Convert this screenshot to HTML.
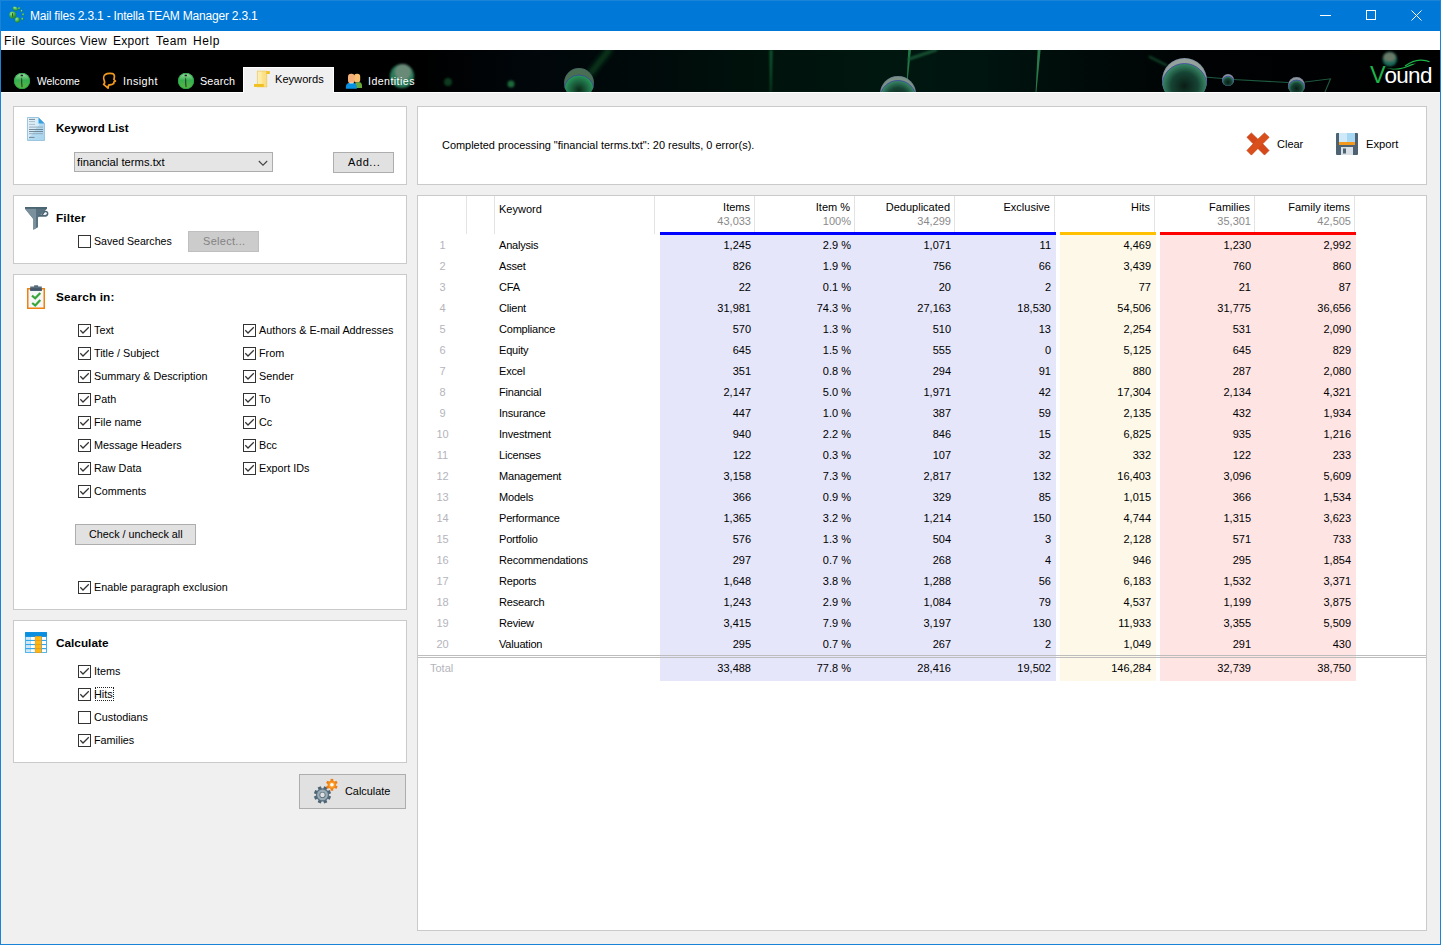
<!DOCTYPE html>
<html><head><meta charset="utf-8"><title>Intella</title><style>
*{margin:0;padding:0;box-sizing:border-box}
html,body{width:1441px;height:945px;overflow:hidden;background:#f0f0f0;font-family:"Liberation Sans",sans-serif}
.a{position:absolute}
.t{position:absolute;white-space:pre;font-size:11px;line-height:11px;color:#000}
.b{font-weight:bold}
.r{text-align:right}
.c{text-align:center}
svg{position:absolute;overflow:visible}
</style></head>
<body>
<div class="a" style="left:0px;top:0px;width:1441px;height:31px;background:#0078d7"></div>
<div class="a" style="left:0px;top:0px;width:1441px;height:1px;background:#1a84d8"></div>
<div class="a" style="left:0px;top:0px;width:1px;height:945px;background:#1883d7"></div>
<div class="a" style="left:1440px;top:0px;width:1px;height:945px;background:#1883d7"></div>
<div class="a" style="left:0px;top:944px;width:1441px;height:1px;background:#1883d7"></div>
<svg style="left:0;top:0" width="30" height="30" viewBox="0 0 30 30">
<defs><radialGradient id="gg" cx="0.35" cy="0.3" r="0.8"><stop offset="0" stop-color="#9ae88a"/><stop offset="0.6" stop-color="#3aa83a"/><stop offset="1" stop-color="#1f7a1f"/></radialGradient></defs>
<ellipse cx="15.3" cy="8.7" rx="2.7" ry="2" transform="rotate(25 15.3 8.7)" fill="url(#gg)"/>
<ellipse cx="19.3" cy="8.3" rx="1.3" ry="1.1" fill="url(#gg)"/>
<ellipse cx="21.6" cy="11" rx="1" ry="1.3" fill="url(#gg)"/>
<ellipse cx="23.2" cy="14.6" rx="1" ry="1.4" fill="url(#gg)"/>
<ellipse cx="22.4" cy="19" rx="1.1" ry="1.4" fill="url(#gg)"/>
<circle cx="12.7" cy="15" r="3.4" fill="url(#gg)"/>
<ellipse cx="17.4" cy="20" rx="2.4" ry="2.7" fill="url(#gg)"/>
<path d="M12.4 13.2 L12.8 16.8" stroke="#2a3a2a" stroke-width="0.9"/>
</svg>
<div class="t " style="left:30px;top:10px;font-size:12px;line-height:12px;color:#fff;letter-spacing:-0.2px">Mail files 2.3.1 - Intella TEAM Manager 2.3.1</div>
<div class="a" style="left:1320px;top:15px;width:11px;height:1px;background:#fff"></div>
<div class="a" style="left:1366px;top:10px;width:10px;height:10px;border:1px solid #fff"></div>
<svg style="left:1411px;top:10px" width="11" height="11" viewBox="0 0 11 11"><path d="M0.5 0.5 L10.5 10.5 M10.5 0.5 L0.5 10.5" stroke="#fff" stroke-width="1"/></svg>
<div class="a" style="left:1px;top:31px;width:1439px;height:19px;background:#fff"></div>
<div class="t " style="left:4px;top:35px;font-size:12px;line-height:12px;letter-spacing:0.6px">File</div>
<div class="t " style="left:31px;top:35px;font-size:12px;line-height:12px;letter-spacing:0.1px">Sources</div>
<div class="t " style="left:80px;top:35px;font-size:12px;line-height:12px;letter-spacing:0.3px">View</div>
<div class="t " style="left:113px;top:35px;font-size:12px;line-height:12px;letter-spacing:0.25px">Export</div>
<div class="t " style="left:156px;top:35px;font-size:12px;line-height:12px;letter-spacing:0.5px">Team</div>
<div class="t " style="left:193px;top:35px;font-size:12px;line-height:12px;letter-spacing:0.6px">Help</div>
<div class="a" style="left:1px;top:50px;width:1439px;height:42px;overflow:hidden;background:linear-gradient(90deg,#000 0px,#000 420px,#01060a 520px,#000a0a 640px,#00120c 760px,#00170f 880px,#001410 980px,#000a08 1100px,#000204 1200px,#000 1439px)">
<svg style="left:-1px;top:-50px" width="1441" height="92" viewBox="0 0 1441 92">
<defs><filter id="bl" x="-50%" y="-50%" width="200%" height="200%"><feGaussianBlur stdDeviation="1.2"/></filter>
<filter id="bl2" x="-50%" y="-50%" width="200%" height="200%"><feGaussianBlur stdDeviation="2.5"/></filter></defs>
<g fill="none" stroke-linecap="round">
<path d="M280 86 L560 86" stroke="#0a2a18" stroke-width="4" filter="url(#bl2)" opacity="0.8"/>
<path d="M609 50 L590 74" stroke="#0f4a22" stroke-width="6" filter="url(#bl2)" opacity="0.8"/>
<path d="M769.5 50 L772.5 50 L771.3 92 L770.3 92Z" fill="#1f8a48" stroke="none" filter="url(#bl)" opacity="0.6"/>
<path d="M908.2 50 L911 50 L907.8 79 L906.8 79Z" fill="#2a9a5a" stroke="none" opacity="0.75"/>
<path d="M909 59 L936 50" stroke="#1a5a38" stroke-width="3" filter="url(#bl)" opacity="0.9"/>
<path d="M1037.6 50 L1040.6 50 L1036.4 92 L1035.6 92Z" fill="#3aa66a" stroke="none" opacity="0.7"/>
<path d="M1150 57 L1166 65" stroke="#0c3a24" stroke-width="3" filter="url(#bl)"/>
<path d="M1189 50 L1189 58" stroke="#1a5a3a" stroke-width="3" filter="url(#bl)"/>
<path d="M1205 77 L1222 78.5 M1233 79.5 L1288 82.5 M1305 82 L1330.5 78.8 L1325 92" stroke="#1e5a40" stroke-width="1.1"/>
</g>
<circle cx="448" cy="82" r="4" fill="#0a3a20" filter="url(#bl)"/>
<circle cx="511" cy="84" r="3.5" fill="#1f6a3a" filter="url(#bl)"/>
<g filter="url(#bl)"><circle cx="402" cy="76" r="12" fill="#2a7a5a"/><circle cx="403" cy="72" r="8" fill="#6a8a78"/></g>
</svg>
</div>
<div class="a" style="left:0;top:50px;width:1440px;height:42px;overflow:hidden">
<svg style="left:562px;top:16px" width="34" height="34" viewBox="-17 -17 34 34">
<defs><clipPath id="cp1"><circle cx="0" cy="0" r="15"/></clipPath>
<radialGradient id="bb1" cx="0.5" cy="0.5" r="0.5"><stop offset="0" stop-color="#0a2a18"/><stop offset="0.6" stop-color="#1e6a44"/><stop offset="1" stop-color="#2a9a5a"/></radialGradient></defs>
<circle cx="0" cy="0" r="15" fill="#4a6e52" opacity="1"/>
<g clip-path="url(#cp1)"><circle cx="0" cy="7" r="15" fill="url(#bb1)"/>
<circle cx="0" cy="7" r="15" fill="none" stroke="#3a3aa8" stroke-width="1" opacity="0.7"/></g>
<circle cx="0" cy="0" r="14.6" fill="none" stroke="#3a4ab8" stroke-width="0.8" opacity="0.25"/>
</svg>
<svg style="left:877.5px;top:24px" width="40" height="40" viewBox="-20 -20 40 40">
<defs><clipPath id="cp2"><circle cx="0" cy="0" r="18"/></clipPath>
<radialGradient id="bb2" cx="0.5" cy="0.5" r="0.5"><stop offset="0" stop-color="#0a1e16"/><stop offset="0.6" stop-color="#164434"/><stop offset="1" stop-color="#3a8a68"/></radialGradient></defs>
<circle cx="0" cy="0" r="18" fill="#8a9e92" opacity="0.9"/>
<g clip-path="url(#cp2)"><circle cx="0" cy="4.5" r="18" fill="url(#bb2)"/>
<circle cx="0" cy="4.5" r="18" fill="none" stroke="#3a3aa8" stroke-width="1" opacity="0.7"/></g>
<circle cx="0" cy="0" r="17.6" fill="none" stroke="#3a4ab8" stroke-width="0.8" opacity="0.25"/>
</svg>
<svg style="left:1160.0px;top:6.0px" width="49.0" height="49.0" viewBox="-24.5 -24.5 49.0 49.0">
<defs><clipPath id="cp3"><circle cx="0" cy="0" r="22.5"/></clipPath>
<radialGradient id="bb3" cx="0.5" cy="0.5" r="0.5"><stop offset="0" stop-color="#0a1e16"/><stop offset="0.6" stop-color="#164434"/><stop offset="1" stop-color="#3a8a68"/></radialGradient></defs>
<circle cx="0" cy="0" r="22.5" fill="#a4b4ac" opacity="0.9"/>
<g clip-path="url(#cp3)"><circle cx="0" cy="5.5" r="22.5" fill="url(#bb3)"/>
<circle cx="0" cy="5.5" r="22.5" fill="none" stroke="#3a3aa8" stroke-width="1" opacity="0.7"/></g>
<circle cx="0" cy="0" r="22.1" fill="none" stroke="#3a4ab8" stroke-width="0.8" opacity="0.25"/>
</svg>
<svg style="left:1219.5px;top:21.599999999999994px" width="16" height="16" viewBox="-8 -8 16 16">
<defs><clipPath id="cp4"><circle cx="0" cy="0" r="6"/></clipPath>
<radialGradient id="bb4" cx="0.5" cy="0.5" r="0.5"><stop offset="0" stop-color="#0a1e16"/><stop offset="0.6" stop-color="#164434"/><stop offset="1" stop-color="#3a8a68"/></radialGradient></defs>
<circle cx="0" cy="0" r="6" fill="#a0aaa8" opacity="0.9"/>
<g clip-path="url(#cp4)"><circle cx="0" cy="2.2" r="6" fill="url(#bb4)"/>
<circle cx="0" cy="2.2" r="6" fill="none" stroke="#3a3aa8" stroke-width="1" opacity="0.7"/></g>
<circle cx="0" cy="0" r="5.6" fill="none" stroke="#3a4ab8" stroke-width="0.8" opacity="0.25"/>
</svg>
<svg style="left:1286.0px;top:24.700000000000003px" width="21.0" height="21.0" viewBox="-10.5 -10.5 21.0 21.0">
<defs><clipPath id="cp5"><circle cx="0" cy="0" r="8.5"/></clipPath>
<radialGradient id="bb5" cx="0.5" cy="0.5" r="0.5"><stop offset="0" stop-color="#0a1e16"/><stop offset="0.6" stop-color="#164434"/><stop offset="1" stop-color="#3a8a68"/></radialGradient></defs>
<circle cx="0" cy="0" r="8.5" fill="#a0aaa8" opacity="0.9"/>
<g clip-path="url(#cp5)"><circle cx="0" cy="3" r="8.5" fill="url(#bb5)"/>
<circle cx="0" cy="3" r="8.5" fill="none" stroke="#3a3aa8" stroke-width="1" opacity="0.7"/></g>
<circle cx="0" cy="0" r="8.1" fill="none" stroke="#3a4ab8" stroke-width="0.8" opacity="0.25"/>
</svg>
</div>
<div class="a" style="left:1px;top:92px;width:1439px;height:1px;background:#fff"></div>
<div class="t " style="left:1370px;top:64px;font-size:22.5px;line-height:23px;color:#fff;letter-spacing:-0.7px"><span style="color:#1db34a;font-size:23.5px;letter-spacing:-1.2px">V</span>ound</div>
<svg style="left:1350px;top:50px" width="91" height="42" viewBox="0 0 91 42">
<defs><filter id="bl3"><feGaussianBlur stdDeviation="0.9"/></filter></defs>
<g filter="url(#bl3)"><circle cx="39.8" cy="9" r="7.3" fill="#1a6a5a"/><ellipse cx="39.5" cy="7" rx="6" ry="4.5" fill="#6a7a68"/></g>
<path d="M35.4 17.5 C42 19.5 50 19 57 16 C61 14.3 64 13.5 66 13.6 C62 15.5 57 18 50 19.3 C44 20 39 19.2 35.4 17.5Z" fill="#1db34a"/>
<path d="M55 16 C60 12.5 64 10.2 70 10.1 C74 10 77 10.4 79.5 11.7" fill="none" stroke="#1db34a" stroke-width="1.2"/>
</svg>
<svg style="left:14px;top:73px" width="16" height="16" viewBox="0 0 16 16">
<defs><linearGradient id="ig14" x1="0" y1="0" x2="0" y2="1"><stop offset="0" stop-color="#a6e0a8"/><stop offset="0.45" stop-color="#38b050"/><stop offset="1" stop-color="#5ab840"/></linearGradient></defs>
<circle cx="8" cy="8" r="8" fill="url(#ig14)"/>
<circle cx="8" cy="8" r="7.6" fill="none" stroke="#1ea848" stroke-width="0.8"/>
<ellipse cx="7.8" cy="2.4" rx="1.3" ry="0.9" fill="#222"/>
<path d="M7.2 4.4 C8.6 5 8.2 7 8.2 9 C8.2 11 8.6 12.5 8.5 14.3 L7.6 14.3 C7.5 12.5 7.2 11 7.2 9 C7.2 7.5 7.6 5.5 7.2 4.4Z" fill="#2a2a2a"/>
</svg>
<div class="t " style="left:37px;top:76px;color:#fff;font-size:10.3px">Welcome</div>
<svg style="left:96px;top:68px" width="26" height="26" viewBox="0 0 26 26">
<path d="M7.6 16.4 L12.1 20.2 L12.6 17.2 L16.3 16.3 L17.7 15.6 L17.9 14 L19.4 13 L17.9 11.5 L18.4 9 C18.6 7.5 17.8 6.2 16.5 5.6 C14.5 5.3 11 5.3 9.3 6.5 C7.6 7.6 7.4 10.5 8.2 12.3 C8.9 13.8 8.7 15.4 7.6 16.4Z" fill="none" stroke="#f39a1e" stroke-width="1.7" stroke-linejoin="round"/>
</svg>
<div class="t " style="left:123px;top:76px;color:#fff;font-size:10.8px;letter-spacing:0.45px">Insight</div>
<svg style="left:178px;top:73px" width="16" height="16" viewBox="0 0 16 16">
<defs><linearGradient id="ig178" x1="0" y1="0" x2="0" y2="1"><stop offset="0" stop-color="#a6e0a8"/><stop offset="0.45" stop-color="#38b050"/><stop offset="1" stop-color="#5ab840"/></linearGradient></defs>
<circle cx="8" cy="8" r="8" fill="url(#ig178)"/>
<circle cx="8" cy="8" r="7.6" fill="none" stroke="#1ea848" stroke-width="0.8"/>
<ellipse cx="7.8" cy="2.4" rx="1.3" ry="0.9" fill="#222"/>
<path d="M7.2 4.4 C8.6 5 8.2 7 8.2 9 C8.2 11 8.6 12.5 8.5 14.3 L7.6 14.3 C7.5 12.5 7.2 11 7.2 9 C7.2 7.5 7.6 5.5 7.2 4.4Z" fill="#2a2a2a"/>
</svg>
<div class="t " style="left:200px;top:76px;color:#fff;font-size:10.8px;letter-spacing:0.15px">Search</div>
<div class="a" style="left:243px;top:67px;width:91px;height:26px;background:#f0f0f0;border-left:1px solid #fff;border-top:1px solid #fff;border-right:1px solid #fff"></div>
<svg style="left:250px;top:66px" width="26" height="26" viewBox="0 0 26 26">
<defs><linearGradient id="scg" x1="0" y1="0" x2="1" y2="0"><stop offset="0" stop-color="#fdf0b8"/><stop offset="0.45" stop-color="#fdeaa0"/><stop offset="0.5" stop-color="#fde38a"/><stop offset="1" stop-color="#fbdc80"/></linearGradient></defs>
<rect x="7.3" y="5.1" width="9.5" height="15.8" fill="url(#scg)" stroke="#ecc860" stroke-width="0.7"/>
<rect x="16.5" y="5.1" width="3.3" height="2.9" fill="#f0c020"/>
<rect x="4" y="18" width="9.8" height="2.9" fill="#f0c020"/>
</svg>
<div class="t " style="left:275px;top:74px;font-size:11.1px">Keywords</div>
<svg style="left:340px;top:66px" width="26" height="26" viewBox="0 0 26 26">
<rect x="14" y="7.8" width="6.2" height="8.8" rx="2.8" fill="#f8c070"/>
<path d="M14.5 22 C14.2 19 14.8 16.2 17.8 16.2 L19 16.2 C21.5 16.2 22.3 18 22 22Z" fill="#6aaa3a"/>
<rect x="8" y="7.8" width="6.6" height="9.6" rx="3" fill="#f5b07a"/>
<path d="M5.9 22.8 C5.6 19.5 6.4 16.9 9.5 16.9 L13 16.9 C16 16.9 17 19 16.8 22.8Z" fill="#0a90e0"/>
<rect x="9.6" y="16.6" width="3.6" height="0.9" fill="#d8eef8"/>
</svg>
<div class="t " style="left:368px;top:76px;color:#fff;font-size:10.6px;letter-spacing:0.45px">Identities</div>
<div class="a" style="left:13px;top:106px;width:394px;height:79px;background:#fff;border:1px solid #cacaca"></div>
<div class="a" style="left:13px;top:195px;width:394px;height:69px;background:#fff;border:1px solid #cacaca"></div>
<div class="a" style="left:13px;top:274px;width:394px;height:336px;background:#fff;border:1px solid #cacaca"></div>
<div class="a" style="left:13px;top:620px;width:394px;height:143px;background:#fff;border:1px solid #cacaca"></div>
<svg style="left:27px;top:117px" width="18" height="24" viewBox="0 0 18 24">
<defs><linearGradient id="dg" x1="0" y1="0" x2="1" y2="1"><stop offset="0" stop-color="#e8f4fb"/><stop offset="0.5" stop-color="#d2eaf8"/><stop offset="0.5" stop-color="#b4dcf2"/><stop offset="1" stop-color="#a8d4ee"/></linearGradient></defs>
<path d="M0.5 0.5 L11.5 0.5 L17.5 6.5 L17.5 23.5 L0.5 23.5Z" fill="url(#dg)" stroke="#9cc6e0" stroke-width="1"/>
<path d="M11.5 0.5 L17.5 6.5 L11.5 6.5Z" fill="#3aa0e0"/>
<g stroke-width="0.9"><path d="M2 2.4 H8 M2 12.5 H16 M2 14.5 H16 M2 20.4 H7.5" stroke="#6a7e8a"/><path d="M2 4.6 H8 M2 7.4 H8" stroke="#a8b8c2"/><path d="M2 10.1 H16 M2 16.7 H16" stroke="#90a4b0"/></g>
</svg>
<div class="t b" style="left:56px;top:123px;font-size:11.55px">Keyword List</div>
<div class="a" style="left:74px;top:152px;width:199px;height:20px;background:#e5e5e5;border:1px solid #adadad"></div>
<div class="t " style="left:77px;top:157px;font-size:11.25px">financial terms.txt</div>
<svg style="left:258px;top:160px" width="10" height="7" viewBox="0 0 10 7"><path d="M0.8 1 L5 5.2 L9.2 1" fill="none" stroke="#444" stroke-width="1.1"/></svg>
<div class="a" style="left:333px;top:152px;width:61px;height:21px;background:#e1e1e1;border:1px solid #adadad"></div>
<div class="t " style="left:348px;top:157px;font-size:11px;letter-spacing:0.6px">Add...</div>
<svg style="left:20px;top:202px" width="32" height="32" viewBox="0 0 32 32">
<path d="M5 5 L27 5 L27 6.8 L18 15.5 L18 25.2 L13.3 27.7 L13.3 17 L5 6.8 Z" fill="#587280"/>
<path d="M5 5 L16 5 L16 26.5 L13.3 27.7 L13.3 17 L5 6.8Z" fill="#7a909c"/>
<rect x="5" y="5" width="22" height="1.8" fill="#4a6472"/>
<path d="M21.5 13.8 L24.5 9.6 C27 9.2 27.9 10.3 27.6 12 C27.3 13.8 25.8 13.9 24 13.9 L18.5 13.9" fill="none" stroke="#4d6775" stroke-width="1.6"/>
</svg>
<div class="t b" style="left:56px;top:213px;font-size:11.8px;letter-spacing:0.15px">Filter</div>
<div class="a" style="left:78px;top:235px;width:13px;height:13px;border:1px solid #333;background:#fff"></div>
<div class="t " style="left:94px;top:236px;font-size:10.6px">Saved Searches</div>
<div class="a" style="left:188px;top:231px;width:71px;height:21px;background:#cccccc;border:1px solid #bfbfbf"></div>
<div class="t " style="left:203px;top:236px;font-size:11px;color:#838383;letter-spacing:0.3px">Select...</div>
<svg style="left:27px;top:285px" width="18" height="24" viewBox="0 0 18 24">
<rect x="0.75" y="3.75" width="16.5" height="19.5" fill="#f4f6f8" stroke="#f08010" stroke-width="1.5"/>
<path d="M3.2 5.8 L3.2 1.5 L7 1.5 L7.3 0.2 L11 0.2 L11.3 1.5 L14.8 1.5 L14.8 5.8Z" fill="#5a6e7c"/>
<rect x="3.2" y="3.2" width="11.6" height="2.6" fill="#44586a"/>
<path d="M5 10.6 L8.2 13.3 L13.3 7.9" fill="none" stroke="#3aa53a" stroke-width="2.2"/>
<path d="M5.2 18 L8.2 20.4 L13.3 15" fill="none" stroke="#3aa53a" stroke-width="2.2"/>
</svg>
<div class="t b" style="left:56px;top:292px;font-size:11.8px;letter-spacing:0.15px">Search in:</div>
<div class="a" style="left:78px;top:324px;width:13px;height:13px;border:1px solid #333;background:#fff"></div><svg style="left:78px;top:324px" width="13" height="13" viewBox="0 0 13 13"><path d="M2.3 6.3 L5 9 L10.8 3.2" fill="none" stroke="#333" stroke-width="1.25"/></svg>
<div class="t " style="left:94px;top:325px;font-size:10.8px">Text</div>
<div class="a" style="left:78px;top:347px;width:13px;height:13px;border:1px solid #333;background:#fff"></div><svg style="left:78px;top:347px" width="13" height="13" viewBox="0 0 13 13"><path d="M2.3 6.3 L5 9 L10.8 3.2" fill="none" stroke="#333" stroke-width="1.25"/></svg>
<div class="t " style="left:94px;top:348px;font-size:10.8px">Title / Subject</div>
<div class="a" style="left:78px;top:370px;width:13px;height:13px;border:1px solid #333;background:#fff"></div><svg style="left:78px;top:370px" width="13" height="13" viewBox="0 0 13 13"><path d="M2.3 6.3 L5 9 L10.8 3.2" fill="none" stroke="#333" stroke-width="1.25"/></svg>
<div class="t " style="left:94px;top:371px;font-size:10.8px">Summary &amp; Description</div>
<div class="a" style="left:78px;top:393px;width:13px;height:13px;border:1px solid #333;background:#fff"></div><svg style="left:78px;top:393px" width="13" height="13" viewBox="0 0 13 13"><path d="M2.3 6.3 L5 9 L10.8 3.2" fill="none" stroke="#333" stroke-width="1.25"/></svg>
<div class="t " style="left:94px;top:394px;font-size:10.8px">Path</div>
<div class="a" style="left:78px;top:416px;width:13px;height:13px;border:1px solid #333;background:#fff"></div><svg style="left:78px;top:416px" width="13" height="13" viewBox="0 0 13 13"><path d="M2.3 6.3 L5 9 L10.8 3.2" fill="none" stroke="#333" stroke-width="1.25"/></svg>
<div class="t " style="left:94px;top:417px;font-size:10.8px">File name</div>
<div class="a" style="left:78px;top:439px;width:13px;height:13px;border:1px solid #333;background:#fff"></div><svg style="left:78px;top:439px" width="13" height="13" viewBox="0 0 13 13"><path d="M2.3 6.3 L5 9 L10.8 3.2" fill="none" stroke="#333" stroke-width="1.25"/></svg>
<div class="t " style="left:94px;top:440px;font-size:10.8px">Message Headers</div>
<div class="a" style="left:78px;top:462px;width:13px;height:13px;border:1px solid #333;background:#fff"></div><svg style="left:78px;top:462px" width="13" height="13" viewBox="0 0 13 13"><path d="M2.3 6.3 L5 9 L10.8 3.2" fill="none" stroke="#333" stroke-width="1.25"/></svg>
<div class="t " style="left:94px;top:463px;font-size:10.8px">Raw Data</div>
<div class="a" style="left:78px;top:485px;width:13px;height:13px;border:1px solid #333;background:#fff"></div><svg style="left:78px;top:485px" width="13" height="13" viewBox="0 0 13 13"><path d="M2.3 6.3 L5 9 L10.8 3.2" fill="none" stroke="#333" stroke-width="1.25"/></svg>
<div class="t " style="left:94px;top:486px;font-size:10.8px">Comments</div>
<div class="a" style="left:243px;top:324px;width:13px;height:13px;border:1px solid #333;background:#fff"></div><svg style="left:243px;top:324px" width="13" height="13" viewBox="0 0 13 13"><path d="M2.3 6.3 L5 9 L10.8 3.2" fill="none" stroke="#333" stroke-width="1.25"/></svg>
<div class="t " style="left:259px;top:325px;font-size:10.8px">Authors &amp; E-mail Addresses</div>
<div class="a" style="left:243px;top:347px;width:13px;height:13px;border:1px solid #333;background:#fff"></div><svg style="left:243px;top:347px" width="13" height="13" viewBox="0 0 13 13"><path d="M2.3 6.3 L5 9 L10.8 3.2" fill="none" stroke="#333" stroke-width="1.25"/></svg>
<div class="t " style="left:259px;top:348px;font-size:10.8px">From</div>
<div class="a" style="left:243px;top:370px;width:13px;height:13px;border:1px solid #333;background:#fff"></div><svg style="left:243px;top:370px" width="13" height="13" viewBox="0 0 13 13"><path d="M2.3 6.3 L5 9 L10.8 3.2" fill="none" stroke="#333" stroke-width="1.25"/></svg>
<div class="t " style="left:259px;top:371px;font-size:10.8px">Sender</div>
<div class="a" style="left:243px;top:393px;width:13px;height:13px;border:1px solid #333;background:#fff"></div><svg style="left:243px;top:393px" width="13" height="13" viewBox="0 0 13 13"><path d="M2.3 6.3 L5 9 L10.8 3.2" fill="none" stroke="#333" stroke-width="1.25"/></svg>
<div class="t " style="left:259px;top:394px;font-size:10.8px">To</div>
<div class="a" style="left:243px;top:416px;width:13px;height:13px;border:1px solid #333;background:#fff"></div><svg style="left:243px;top:416px" width="13" height="13" viewBox="0 0 13 13"><path d="M2.3 6.3 L5 9 L10.8 3.2" fill="none" stroke="#333" stroke-width="1.25"/></svg>
<div class="t " style="left:259px;top:417px;font-size:10.8px">Cc</div>
<div class="a" style="left:243px;top:439px;width:13px;height:13px;border:1px solid #333;background:#fff"></div><svg style="left:243px;top:439px" width="13" height="13" viewBox="0 0 13 13"><path d="M2.3 6.3 L5 9 L10.8 3.2" fill="none" stroke="#333" stroke-width="1.25"/></svg>
<div class="t " style="left:259px;top:440px;font-size:10.8px">Bcc</div>
<div class="a" style="left:243px;top:462px;width:13px;height:13px;border:1px solid #333;background:#fff"></div><svg style="left:243px;top:462px" width="13" height="13" viewBox="0 0 13 13"><path d="M2.3 6.3 L5 9 L10.8 3.2" fill="none" stroke="#333" stroke-width="1.25"/></svg>
<div class="t " style="left:259px;top:463px;font-size:10.8px">Export IDs</div>
<div class="a" style="left:75px;top:524px;width:121px;height:21px;background:#e1e1e1;border:1px solid #adadad"></div>
<div class="t " style="left:89px;top:529px;font-size:10.8px">Check / uncheck all</div>
<div class="a" style="left:78px;top:581px;width:13px;height:13px;border:1px solid #333;background:#fff"></div><svg style="left:78px;top:581px" width="13" height="13" viewBox="0 0 13 13"><path d="M2.3 6.3 L5 9 L10.8 3.2" fill="none" stroke="#333" stroke-width="1.25"/></svg>
<div class="t " style="left:94px;top:582px;font-size:10.8px">Enable paragraph exclusion</div>
<svg style="left:20px;top:626px" width="32" height="32" viewBox="0 0 32 32">
<rect x="5.1" y="6.1" width="21.8" height="20.8" fill="#30a8ec"/>
<rect x="5.1" y="6.1" width="21.8" height="4.6" fill="#0a8ee0"/>
<g fill="#fff"><rect x="11" y="11" width="3.9" height="2.9"/><rect x="11" y="15" width="3.9" height="3"/><rect x="11" y="19.1" width="3.9" height="2.9"/><rect x="11" y="23.2" width="3.9" height="2.9"/>
<rect x="21.8" y="11" width="4.2" height="2.9"/><rect x="21.8" y="15" width="4.2" height="3"/><rect x="21.8" y="19.1" width="4.2" height="2.9"/><rect x="21.8" y="23.2" width="4.2" height="2.9"/></g>
<g fill="#cfe8f8"><rect x="5.9" y="11" width="4.9" height="2.9"/><rect x="5.9" y="15" width="4.9" height="3"/><rect x="5.9" y="19.1" width="4.9" height="2.9"/><rect x="5.9" y="23.2" width="4.9" height="2.9"/></g>
<rect x="15" y="10.2" width="6.5" height="16.7" fill="#f49a10"/>
<g fill="#ffb810"><rect x="15.5" y="10.8" width="5.5" height="3.2"/><rect x="15.5" y="15" width="5.5" height="3"/><rect x="15.5" y="19.1" width="5.5" height="2.9"/><rect x="15.5" y="23.2" width="5.5" height="3"/></g>
</svg>
<div class="t b" style="left:56px;top:638px;font-size:11.8px">Calculate</div>
<div class="a" style="left:78px;top:665px;width:13px;height:13px;border:1px solid #333;background:#fff"></div><svg style="left:78px;top:665px" width="13" height="13" viewBox="0 0 13 13"><path d="M2.3 6.3 L5 9 L10.8 3.2" fill="none" stroke="#333" stroke-width="1.25"/></svg>
<div class="t " style="left:94px;top:666px;font-size:10.8px">Items</div>
<div class="a" style="left:78px;top:688px;width:13px;height:13px;border:1px solid #333;background:#fff"></div><svg style="left:78px;top:688px" width="13" height="13" viewBox="0 0 13 13"><path d="M2.3 6.3 L5 9 L10.8 3.2" fill="none" stroke="#333" stroke-width="1.25"/></svg>
<div class="t " style="left:94px;top:689px;font-size:10.8px">Hits</div>
<div class="a" style="left:78px;top:711px;width:13px;height:13px;border:1px solid #333;background:#fff"></div>
<div class="t " style="left:94px;top:712px;font-size:10.8px">Custodians</div>
<div class="a" style="left:78px;top:734px;width:13px;height:13px;border:1px solid #333;background:#fff"></div><svg style="left:78px;top:734px" width="13" height="13" viewBox="0 0 13 13"><path d="M2.3 6.3 L5 9 L10.8 3.2" fill="none" stroke="#333" stroke-width="1.25"/></svg>
<div class="t " style="left:94px;top:735px;font-size:10.8px">Families</div>
<div class="a" style="left:95px;top:687px;width:19px;height:14px;border:1px dotted #222"></div>
<div class="a" style="left:299px;top:774px;width:107px;height:35px;background:#e1e1e1;border:1px solid #adadad"></div>
<svg style="left:306px;top:774px" width="40" height="34" viewBox="0 0 40 34">
<g transform="translate(16.5,20.9)">
<g fill="#4d6472" transform="rotate(22.5)"><rect x="-1.7" y="-8.6" width="3.4" height="17.2"/><rect x="-8.6" y="-1.7" width="17.2" height="3.4"/>
<rect x="-1.7" y="-8.6" width="3.4" height="17.2" transform="rotate(45)"/><rect x="-1.7" y="-8.6" width="3.4" height="17.2" transform="rotate(-45)"/></g>
<circle r="6.6" fill="#5a7080"/><circle r="5.4" fill="#9aacb6"/><circle r="3" fill="#4d6472"/><circle r="2.3" fill="#e1e1e1"/></g>
<g transform="translate(25.9,10.8)">
<g fill="#f07a10"><rect x="-1.3" y="-5.9" width="2.6" height="11.8"/><rect x="-1.3" y="-5.9" width="2.6" height="11.8" transform="rotate(60)"/><rect x="-1.3" y="-5.9" width="2.6" height="11.8" transform="rotate(-60)"/></g>
<circle r="4.3" fill="#f58a14"/><circle r="2.9" fill="#fba030"/><circle r="1.8" fill="#fff"/></g>
</svg>
<div class="t " style="left:345px;top:786px;font-size:10.9px">Calculate</div>
<div class="a" style="left:417px;top:106px;width:1010px;height:79px;background:#fff;border:1px solid #cacaca"></div>
<div class="t " style="left:442px;top:140px;font-size:10.95px">Completed processing "financial terms.txt": 20 results, 0 error(s).</div>
<svg style="left:1242px;top:128px" width="32" height="32" viewBox="0 0 32 32">
<path d="M9.4 4.9 L15.9 11.2 L22.5 4.9 L27.1 9.3 L20.7 15.8 L27.1 22.5 L22.5 27.1 L15.9 20.4 L9.4 27.1 L4.9 22.5 L11.2 15.8 L4.9 9.3Z" fill="#d4481a" stroke="#c03c12" stroke-width="0.6"/>
<path d="M22.5 4.9 L27.1 9.3 L11.2 25.2 L9.4 27.1 L4.9 22.5 Z" fill="#dc5420" opacity="0.7"/>
</svg>
<div class="t " style="left:1277px;top:139px;font-size:11px">Clear</div>
<svg style="left:1336px;top:133px" width="22" height="22" viewBox="0 0 22 22">
<rect x="0" y="0" width="22" height="22" rx="1" fill="#4d6272"/>
<rect x="3" y="0" width="16" height="9" fill="#cfe9f8"/>
<rect x="11" y="0" width="8" height="9" fill="#a6d8f4"/>
<rect x="3" y="9" width="16" height="3" fill="#f39a1e"/>
<rect x="5" y="14" width="12" height="8" fill="#d9e0e5"/>
<rect x="7" y="15.5" width="3" height="5" fill="#4d6272"/>
</svg>
<div class="t " style="left:1366px;top:139px;font-size:11.2px">Export</div>
<div class="a" style="left:417px;top:195px;width:1010px;height:736px;background:#fff;border:1px solid #cacaca"></div>
<div class="a" style="left:466px;top:196px;width:1px;height:38px;background:#e3e3e3"></div>
<div class="a" style="left:494px;top:196px;width:1px;height:38px;background:#e3e3e3"></div>
<div class="a" style="left:654px;top:196px;width:1px;height:38px;background:#e3e3e3"></div>
<div class="a" style="left:754px;top:196px;width:1px;height:38px;background:#e3e3e3"></div>
<div class="a" style="left:854px;top:196px;width:1px;height:38px;background:#e3e3e3"></div>
<div class="a" style="left:954px;top:196px;width:1px;height:38px;background:#e3e3e3"></div>
<div class="a" style="left:1054px;top:196px;width:1px;height:38px;background:#e3e3e3"></div>
<div class="a" style="left:1154px;top:196px;width:1px;height:38px;background:#e3e3e3"></div>
<div class="a" style="left:1254px;top:196px;width:1px;height:38px;background:#e3e3e3"></div>
<div class="a" style="left:1354px;top:196px;width:1px;height:38px;background:#e3e3e3"></div>
<div class="t " style="left:499px;top:204px;font-size:11px">Keyword</div>
<div class="t r" style="left:550px;top:202px;width:200px;font-size:11px">Items</div>
<div class="t r" style="left:551px;top:216px;width:200px;font-size:11px;color:#8a8a8a">43,033</div>
<div class="t r" style="left:650px;top:202px;width:200px;font-size:11px">Item %</div>
<div class="t r" style="left:651px;top:216px;width:200px;font-size:11px;color:#8a8a8a">100%</div>
<div class="t r" style="left:750px;top:202px;width:200px;font-size:11px">Deduplicated</div>
<div class="t r" style="left:751px;top:216px;width:200px;font-size:11px;color:#8a8a8a">34,299</div>
<div class="t r" style="left:850px;top:202px;width:200px;font-size:11px">Exclusive</div>
<div class="t r" style="left:950px;top:202px;width:200px;font-size:11px">Hits</div>
<div class="t r" style="left:1050px;top:202px;width:200px;font-size:11px">Families</div>
<div class="t r" style="left:1051px;top:216px;width:200px;font-size:11px;color:#8a8a8a">35,301</div>
<div class="t r" style="left:1150px;top:202px;width:200px;font-size:11px">Family items</div>
<div class="t r" style="left:1151px;top:216px;width:200px;font-size:11px;color:#8a8a8a">42,505</div>
<div class="a" style="left:660px;top:232px;width:396px;height:3px;background:#0000ff"></div>
<div class="a" style="left:1060px;top:232px;width:96px;height:3px;background:#ffc000"></div>
<div class="a" style="left:1160px;top:232px;width:196px;height:3px;background:#ff0000"></div>
<div class="a" style="left:660px;top:235px;width:396px;height:446px;background:#e6e6fa"></div>
<div class="a" style="left:1060px;top:235px;width:96px;height:446px;background:#fdf8e8"></div>
<div class="a" style="left:1160px;top:235px;width:196px;height:446px;background:#ffe4e4"></div>
<div class="t c" style="left:418px;top:240px;width:49px;color:#b4b4bc">1</div>
<div class="t " style="left:499px;top:240px;letter-spacing:-0.2px">Analysis</div>
<div class="t r" style="left:551px;top:240px;width:200px">1,245</div>
<div class="t r" style="left:651px;top:240px;width:200px">2.9 %</div>
<div class="t r" style="left:751px;top:240px;width:200px">1,071</div>
<div class="t r" style="left:851px;top:240px;width:200px">11</div>
<div class="t r" style="left:951px;top:240px;width:200px">4,469</div>
<div class="t r" style="left:1051px;top:240px;width:200px">1,230</div>
<div class="t r" style="left:1151px;top:240px;width:200px">2,992</div>
<div class="t c" style="left:418px;top:261px;width:49px;color:#b4b4bc">2</div>
<div class="t " style="left:499px;top:261px;letter-spacing:-0.2px">Asset</div>
<div class="t r" style="left:551px;top:261px;width:200px">826</div>
<div class="t r" style="left:651px;top:261px;width:200px">1.9 %</div>
<div class="t r" style="left:751px;top:261px;width:200px">756</div>
<div class="t r" style="left:851px;top:261px;width:200px">66</div>
<div class="t r" style="left:951px;top:261px;width:200px">3,439</div>
<div class="t r" style="left:1051px;top:261px;width:200px">760</div>
<div class="t r" style="left:1151px;top:261px;width:200px">860</div>
<div class="t c" style="left:418px;top:282px;width:49px;color:#b4b4bc">3</div>
<div class="t " style="left:499px;top:282px;letter-spacing:-0.2px">CFA</div>
<div class="t r" style="left:551px;top:282px;width:200px">22</div>
<div class="t r" style="left:651px;top:282px;width:200px">0.1 %</div>
<div class="t r" style="left:751px;top:282px;width:200px">20</div>
<div class="t r" style="left:851px;top:282px;width:200px">2</div>
<div class="t r" style="left:951px;top:282px;width:200px">77</div>
<div class="t r" style="left:1051px;top:282px;width:200px">21</div>
<div class="t r" style="left:1151px;top:282px;width:200px">87</div>
<div class="t c" style="left:418px;top:303px;width:49px;color:#b4b4bc">4</div>
<div class="t " style="left:499px;top:303px;letter-spacing:-0.2px">Client</div>
<div class="t r" style="left:551px;top:303px;width:200px">31,981</div>
<div class="t r" style="left:651px;top:303px;width:200px">74.3 %</div>
<div class="t r" style="left:751px;top:303px;width:200px">27,163</div>
<div class="t r" style="left:851px;top:303px;width:200px">18,530</div>
<div class="t r" style="left:951px;top:303px;width:200px">54,506</div>
<div class="t r" style="left:1051px;top:303px;width:200px">31,775</div>
<div class="t r" style="left:1151px;top:303px;width:200px">36,656</div>
<div class="t c" style="left:418px;top:324px;width:49px;color:#b4b4bc">5</div>
<div class="t " style="left:499px;top:324px;letter-spacing:-0.2px">Compliance</div>
<div class="t r" style="left:551px;top:324px;width:200px">570</div>
<div class="t r" style="left:651px;top:324px;width:200px">1.3 %</div>
<div class="t r" style="left:751px;top:324px;width:200px">510</div>
<div class="t r" style="left:851px;top:324px;width:200px">13</div>
<div class="t r" style="left:951px;top:324px;width:200px">2,254</div>
<div class="t r" style="left:1051px;top:324px;width:200px">531</div>
<div class="t r" style="left:1151px;top:324px;width:200px">2,090</div>
<div class="t c" style="left:418px;top:345px;width:49px;color:#b4b4bc">6</div>
<div class="t " style="left:499px;top:345px;letter-spacing:-0.2px">Equity</div>
<div class="t r" style="left:551px;top:345px;width:200px">645</div>
<div class="t r" style="left:651px;top:345px;width:200px">1.5 %</div>
<div class="t r" style="left:751px;top:345px;width:200px">555</div>
<div class="t r" style="left:851px;top:345px;width:200px">0</div>
<div class="t r" style="left:951px;top:345px;width:200px">5,125</div>
<div class="t r" style="left:1051px;top:345px;width:200px">645</div>
<div class="t r" style="left:1151px;top:345px;width:200px">829</div>
<div class="t c" style="left:418px;top:366px;width:49px;color:#b4b4bc">7</div>
<div class="t " style="left:499px;top:366px;letter-spacing:-0.2px">Excel</div>
<div class="t r" style="left:551px;top:366px;width:200px">351</div>
<div class="t r" style="left:651px;top:366px;width:200px">0.8 %</div>
<div class="t r" style="left:751px;top:366px;width:200px">294</div>
<div class="t r" style="left:851px;top:366px;width:200px">91</div>
<div class="t r" style="left:951px;top:366px;width:200px">880</div>
<div class="t r" style="left:1051px;top:366px;width:200px">287</div>
<div class="t r" style="left:1151px;top:366px;width:200px">2,080</div>
<div class="t c" style="left:418px;top:387px;width:49px;color:#b4b4bc">8</div>
<div class="t " style="left:499px;top:387px;letter-spacing:-0.2px">Financial</div>
<div class="t r" style="left:551px;top:387px;width:200px">2,147</div>
<div class="t r" style="left:651px;top:387px;width:200px">5.0 %</div>
<div class="t r" style="left:751px;top:387px;width:200px">1,971</div>
<div class="t r" style="left:851px;top:387px;width:200px">42</div>
<div class="t r" style="left:951px;top:387px;width:200px">17,304</div>
<div class="t r" style="left:1051px;top:387px;width:200px">2,134</div>
<div class="t r" style="left:1151px;top:387px;width:200px">4,321</div>
<div class="t c" style="left:418px;top:408px;width:49px;color:#b4b4bc">9</div>
<div class="t " style="left:499px;top:408px;letter-spacing:-0.2px">Insurance</div>
<div class="t r" style="left:551px;top:408px;width:200px">447</div>
<div class="t r" style="left:651px;top:408px;width:200px">1.0 %</div>
<div class="t r" style="left:751px;top:408px;width:200px">387</div>
<div class="t r" style="left:851px;top:408px;width:200px">59</div>
<div class="t r" style="left:951px;top:408px;width:200px">2,135</div>
<div class="t r" style="left:1051px;top:408px;width:200px">432</div>
<div class="t r" style="left:1151px;top:408px;width:200px">1,934</div>
<div class="t c" style="left:418px;top:429px;width:49px;color:#b4b4bc">10</div>
<div class="t " style="left:499px;top:429px;letter-spacing:-0.2px">Investment</div>
<div class="t r" style="left:551px;top:429px;width:200px">940</div>
<div class="t r" style="left:651px;top:429px;width:200px">2.2 %</div>
<div class="t r" style="left:751px;top:429px;width:200px">846</div>
<div class="t r" style="left:851px;top:429px;width:200px">15</div>
<div class="t r" style="left:951px;top:429px;width:200px">6,825</div>
<div class="t r" style="left:1051px;top:429px;width:200px">935</div>
<div class="t r" style="left:1151px;top:429px;width:200px">1,216</div>
<div class="t c" style="left:418px;top:450px;width:49px;color:#b4b4bc">11</div>
<div class="t " style="left:499px;top:450px;letter-spacing:-0.2px">Licenses</div>
<div class="t r" style="left:551px;top:450px;width:200px">122</div>
<div class="t r" style="left:651px;top:450px;width:200px">0.3 %</div>
<div class="t r" style="left:751px;top:450px;width:200px">107</div>
<div class="t r" style="left:851px;top:450px;width:200px">32</div>
<div class="t r" style="left:951px;top:450px;width:200px">332</div>
<div class="t r" style="left:1051px;top:450px;width:200px">122</div>
<div class="t r" style="left:1151px;top:450px;width:200px">233</div>
<div class="t c" style="left:418px;top:471px;width:49px;color:#b4b4bc">12</div>
<div class="t " style="left:499px;top:471px;letter-spacing:-0.2px">Management</div>
<div class="t r" style="left:551px;top:471px;width:200px">3,158</div>
<div class="t r" style="left:651px;top:471px;width:200px">7.3 %</div>
<div class="t r" style="left:751px;top:471px;width:200px">2,817</div>
<div class="t r" style="left:851px;top:471px;width:200px">132</div>
<div class="t r" style="left:951px;top:471px;width:200px">16,403</div>
<div class="t r" style="left:1051px;top:471px;width:200px">3,096</div>
<div class="t r" style="left:1151px;top:471px;width:200px">5,609</div>
<div class="t c" style="left:418px;top:492px;width:49px;color:#b4b4bc">13</div>
<div class="t " style="left:499px;top:492px;letter-spacing:-0.2px">Models</div>
<div class="t r" style="left:551px;top:492px;width:200px">366</div>
<div class="t r" style="left:651px;top:492px;width:200px">0.9 %</div>
<div class="t r" style="left:751px;top:492px;width:200px">329</div>
<div class="t r" style="left:851px;top:492px;width:200px">85</div>
<div class="t r" style="left:951px;top:492px;width:200px">1,015</div>
<div class="t r" style="left:1051px;top:492px;width:200px">366</div>
<div class="t r" style="left:1151px;top:492px;width:200px">1,534</div>
<div class="t c" style="left:418px;top:513px;width:49px;color:#b4b4bc">14</div>
<div class="t " style="left:499px;top:513px;letter-spacing:-0.2px">Performance</div>
<div class="t r" style="left:551px;top:513px;width:200px">1,365</div>
<div class="t r" style="left:651px;top:513px;width:200px">3.2 %</div>
<div class="t r" style="left:751px;top:513px;width:200px">1,214</div>
<div class="t r" style="left:851px;top:513px;width:200px">150</div>
<div class="t r" style="left:951px;top:513px;width:200px">4,744</div>
<div class="t r" style="left:1051px;top:513px;width:200px">1,315</div>
<div class="t r" style="left:1151px;top:513px;width:200px">3,623</div>
<div class="t c" style="left:418px;top:534px;width:49px;color:#b4b4bc">15</div>
<div class="t " style="left:499px;top:534px;letter-spacing:-0.2px">Portfolio</div>
<div class="t r" style="left:551px;top:534px;width:200px">576</div>
<div class="t r" style="left:651px;top:534px;width:200px">1.3 %</div>
<div class="t r" style="left:751px;top:534px;width:200px">504</div>
<div class="t r" style="left:851px;top:534px;width:200px">3</div>
<div class="t r" style="left:951px;top:534px;width:200px">2,128</div>
<div class="t r" style="left:1051px;top:534px;width:200px">571</div>
<div class="t r" style="left:1151px;top:534px;width:200px">733</div>
<div class="t c" style="left:418px;top:555px;width:49px;color:#b4b4bc">16</div>
<div class="t " style="left:499px;top:555px;letter-spacing:-0.2px">Recommendations</div>
<div class="t r" style="left:551px;top:555px;width:200px">297</div>
<div class="t r" style="left:651px;top:555px;width:200px">0.7 %</div>
<div class="t r" style="left:751px;top:555px;width:200px">268</div>
<div class="t r" style="left:851px;top:555px;width:200px">4</div>
<div class="t r" style="left:951px;top:555px;width:200px">946</div>
<div class="t r" style="left:1051px;top:555px;width:200px">295</div>
<div class="t r" style="left:1151px;top:555px;width:200px">1,854</div>
<div class="t c" style="left:418px;top:576px;width:49px;color:#b4b4bc">17</div>
<div class="t " style="left:499px;top:576px;letter-spacing:-0.2px">Reports</div>
<div class="t r" style="left:551px;top:576px;width:200px">1,648</div>
<div class="t r" style="left:651px;top:576px;width:200px">3.8 %</div>
<div class="t r" style="left:751px;top:576px;width:200px">1,288</div>
<div class="t r" style="left:851px;top:576px;width:200px">56</div>
<div class="t r" style="left:951px;top:576px;width:200px">6,183</div>
<div class="t r" style="left:1051px;top:576px;width:200px">1,532</div>
<div class="t r" style="left:1151px;top:576px;width:200px">3,371</div>
<div class="t c" style="left:418px;top:597px;width:49px;color:#b4b4bc">18</div>
<div class="t " style="left:499px;top:597px;letter-spacing:-0.2px">Research</div>
<div class="t r" style="left:551px;top:597px;width:200px">1,243</div>
<div class="t r" style="left:651px;top:597px;width:200px">2.9 %</div>
<div class="t r" style="left:751px;top:597px;width:200px">1,084</div>
<div class="t r" style="left:851px;top:597px;width:200px">79</div>
<div class="t r" style="left:951px;top:597px;width:200px">4,537</div>
<div class="t r" style="left:1051px;top:597px;width:200px">1,199</div>
<div class="t r" style="left:1151px;top:597px;width:200px">3,875</div>
<div class="t c" style="left:418px;top:618px;width:49px;color:#b4b4bc">19</div>
<div class="t " style="left:499px;top:618px;letter-spacing:-0.2px">Review</div>
<div class="t r" style="left:551px;top:618px;width:200px">3,415</div>
<div class="t r" style="left:651px;top:618px;width:200px">7.9 %</div>
<div class="t r" style="left:751px;top:618px;width:200px">3,197</div>
<div class="t r" style="left:851px;top:618px;width:200px">130</div>
<div class="t r" style="left:951px;top:618px;width:200px">11,933</div>
<div class="t r" style="left:1051px;top:618px;width:200px">3,355</div>
<div class="t r" style="left:1151px;top:618px;width:200px">5,509</div>
<div class="t c" style="left:418px;top:639px;width:49px;color:#b4b4bc">20</div>
<div class="t " style="left:499px;top:639px;letter-spacing:-0.2px">Valuation</div>
<div class="t r" style="left:551px;top:639px;width:200px">295</div>
<div class="t r" style="left:651px;top:639px;width:200px">0.7 %</div>
<div class="t r" style="left:751px;top:639px;width:200px">267</div>
<div class="t r" style="left:851px;top:639px;width:200px">2</div>
<div class="t r" style="left:951px;top:639px;width:200px">1,049</div>
<div class="t r" style="left:1051px;top:639px;width:200px">291</div>
<div class="t r" style="left:1151px;top:639px;width:200px">430</div>
<div class="a" style="left:418px;top:655px;width:1008px;height:1px;background:#bdbdbd"></div>
<div class="a" style="left:418px;top:657px;width:1008px;height:1px;background:#bdbdbd"></div>
<div class="t " style="left:430px;top:663px;color:#b4b4bc">Total</div>
<div class="t r" style="left:551px;top:663px;width:200px">33,488</div>
<div class="t r" style="left:651px;top:663px;width:200px">77.8 %</div>
<div class="t r" style="left:751px;top:663px;width:200px">28,416</div>
<div class="t r" style="left:851px;top:663px;width:200px">19,502</div>
<div class="t r" style="left:951px;top:663px;width:200px">146,284</div>
<div class="t r" style="left:1051px;top:663px;width:200px">32,739</div>
<div class="t r" style="left:1151px;top:663px;width:200px">38,750</div>
</body></html>
